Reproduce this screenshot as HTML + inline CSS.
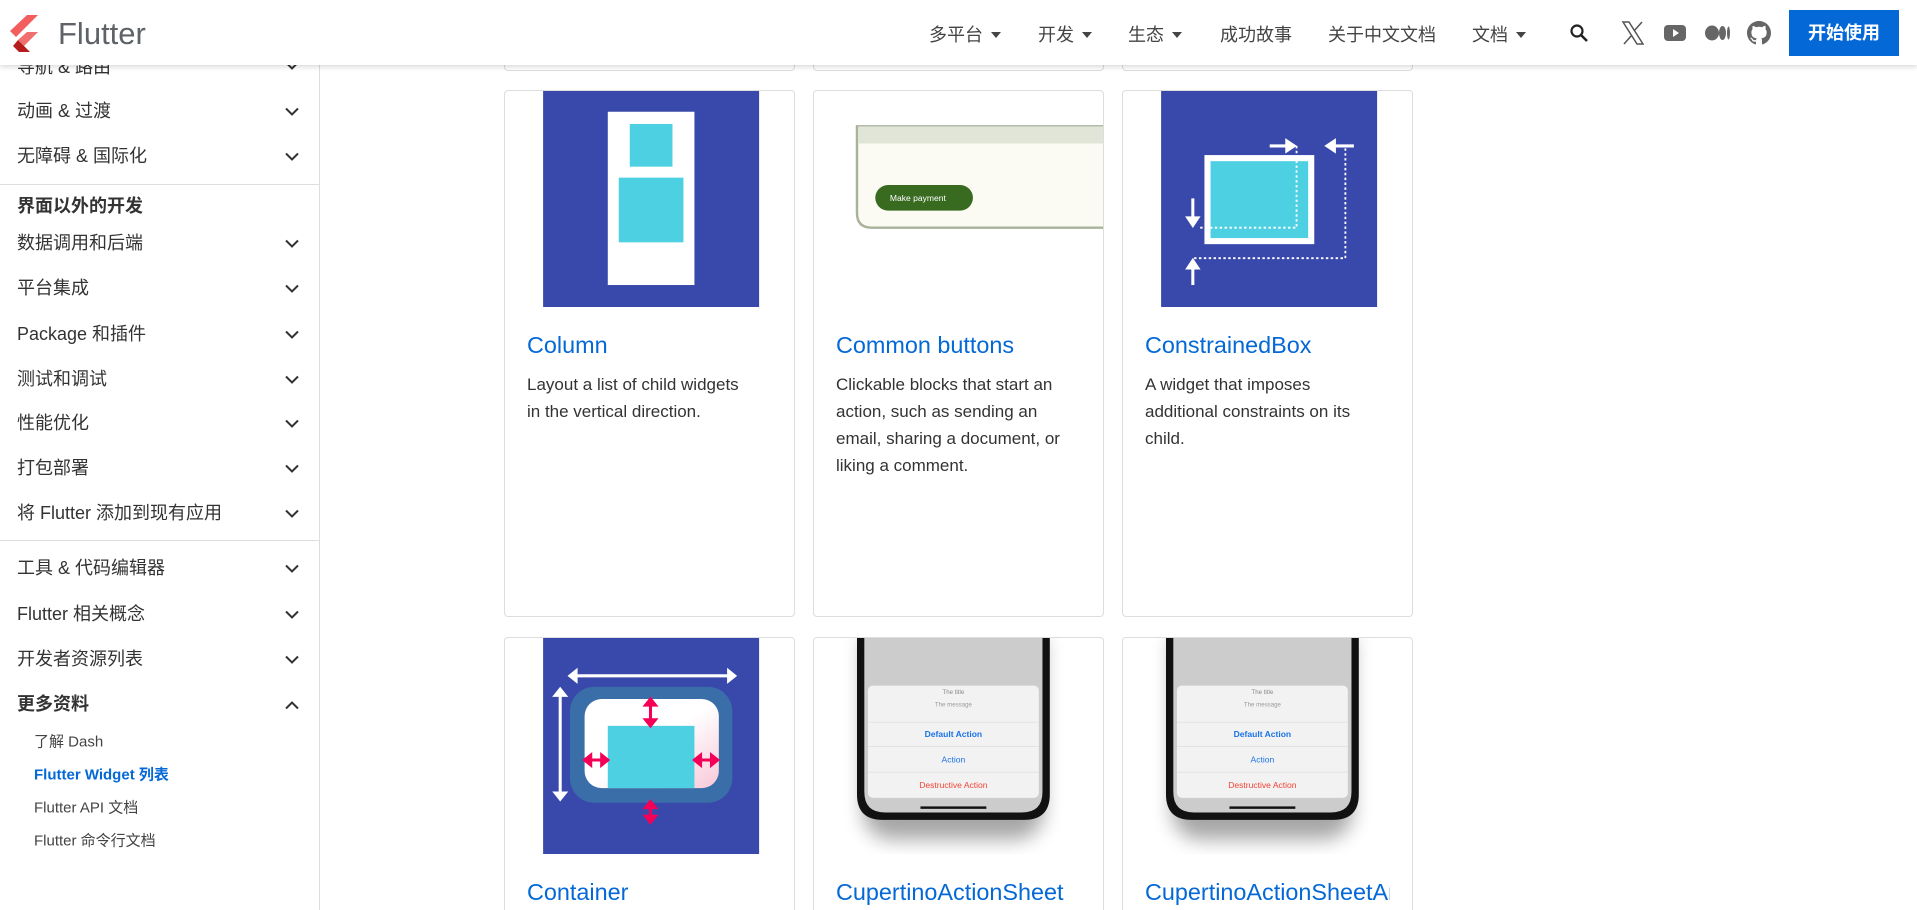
<!DOCTYPE html>
<html><head><meta charset="utf-8"><style>
*{margin:0;padding:0;box-sizing:border-box}
html{width:1917px;height:910px;overflow:hidden}
body{width:1917px;height:910px;overflow:hidden;background:#fff;font-family:"Liberation Sans","Noto Sans CJK SC",sans-serif;color:#333;position:relative}
.hdr{position:absolute;left:0;top:0;width:1917px;height:65px;background:#fff;box-shadow:0 2px 5px rgba(0,0,0,.15);z-index:10}
.nav{position:absolute;top:21px;font-size:18px;color:#444;white-space:nowrap}
.tri{display:inline-block;width:0;height:0;border-left:5px solid transparent;border-right:5px solid transparent;border-top:6px solid #444;vertical-align:middle;margin-left:8px;margin-top:-3px}
.side{position:absolute;left:0;top:0;width:320px;height:910px;border-right:1px solid #ddd}
.si{position:absolute;left:17px;font-size:18px;color:#333;transform:translateY(-50%);white-space:nowrap}
.si.b{font-weight:bold}
.chev{position:absolute;left:285px;transform:translateY(-50%)}
.sub{position:absolute;left:34px;font-size:15px;color:#444;transform:translateY(-50%);white-space:nowrap}
.hr{position:absolute;left:0;width:320px;height:1px;background:#ddd}
.card{position:absolute;width:291px;height:527px;border:1px solid #ddd;border-radius:4px;background:#fff;overflow:hidden}
.card .t{position:absolute;left:22px;top:241px;width:245px;overflow:hidden;font-size:23.4px;color:#0468d7;white-space:nowrap}
.card .d{position:absolute;left:22px;top:280px;width:235px;font-size:17px;line-height:27px;color:#333}
.card svg.img{position:absolute;left:0;top:0}
</style></head><body>
<div class="side">
<div class="si" style="top:66px">导航 &amp; 路由</div><svg class="chev" style="top:66px" width="14" height="9"><polyline points="1,1 7,7 13,1" fill="none" stroke="#333" stroke-width="2"/></svg>
<div class="si" style="top:110px">动画 &amp; 过渡</div><svg class="chev" style="top:112px" width="14" height="9"><polyline points="1,1 7,7 13,1" fill="none" stroke="#333" stroke-width="2"/></svg>
<div class="si" style="top:155px">无障碍 &amp; 国际化</div><svg class="chev" style="top:157px" width="14" height="9"><polyline points="1,1 7,7 13,1" fill="none" stroke="#333" stroke-width="2"/></svg>
<div class="hr" style="top:184px"></div>
<div class="si b" style="top:205px">界面以外的开发</div>
<div class="si" style="top:242px">数据调用和后端</div><svg class="chev" style="top:244px" width="14" height="9"><polyline points="1,1 7,7 13,1" fill="none" stroke="#333" stroke-width="2"/></svg>
<div class="si" style="top:287px">平台集成</div><svg class="chev" style="top:289px" width="14" height="9"><polyline points="1,1 7,7 13,1" fill="none" stroke="#333" stroke-width="2"/></svg>
<div class="si" style="top:333px">Package 和插件</div><svg class="chev" style="top:335px" width="14" height="9"><polyline points="1,1 7,7 13,1" fill="none" stroke="#333" stroke-width="2"/></svg>
<div class="si" style="top:378px">测试和调试</div><svg class="chev" style="top:380px" width="14" height="9"><polyline points="1,1 7,7 13,1" fill="none" stroke="#333" stroke-width="2"/></svg>
<div class="si" style="top:422px">性能优化</div><svg class="chev" style="top:424px" width="14" height="9"><polyline points="1,1 7,7 13,1" fill="none" stroke="#333" stroke-width="2"/></svg>
<div class="si" style="top:467px">打包部署</div><svg class="chev" style="top:469px" width="14" height="9"><polyline points="1,1 7,7 13,1" fill="none" stroke="#333" stroke-width="2"/></svg>
<div class="si" style="top:512px">将 Flutter 添加到现有应用</div><svg class="chev" style="top:514px" width="14" height="9"><polyline points="1,1 7,7 13,1" fill="none" stroke="#333" stroke-width="2"/></svg>
<div class="hr" style="top:540px"></div>
<div class="si" style="top:567px">工具 &amp; 代码编辑器</div><svg class="chev" style="top:569px" width="14" height="9"><polyline points="1,1 7,7 13,1" fill="none" stroke="#333" stroke-width="2"/></svg>
<div class="si" style="top:613px">Flutter 相关概念</div><svg class="chev" style="top:615px" width="14" height="9"><polyline points="1,1 7,7 13,1" fill="none" stroke="#333" stroke-width="2"/></svg>
<div class="si" style="top:658px">开发者资源列表</div><svg class="chev" style="top:660px" width="14" height="9"><polyline points="1,1 7,7 13,1" fill="none" stroke="#333" stroke-width="2"/></svg>
<div class="si b" style="top:703px">更多资料</div><svg class="chev" style="top:705px" width="14" height="9"><polyline points="1,8 7,2 13,8" fill="none" stroke="#333" stroke-width="2"/></svg>
<div class="sub" style="top:741px">了解 Dash</div>
<div class="sub" style="top:774px;color:#0468d7;font-weight:bold">Flutter Widget 列表</div>
<div class="sub" style="top:807px">Flutter API 文档</div>
<div class="sub" style="top:840px">Flutter 命令行文档</div>
</div>

<div class="card" style="left:504px;top:-460px;height:531px"></div>
<div class="card" style="left:813px;top:-460px;height:531px"></div>
<div class="card" style="left:1122px;top:-460px;height:531px"></div>

<div class="card" style="left:504px;top:90px">
<svg class="img" width="291" height="216" viewBox="0 0 238 177"><rect x="31" y="0" width="177" height="177" fill="#3949ab"/><rect x="84" y="17" width="71" height="142" fill="#fff"/><rect x="102" y="27" width="35" height="35" fill="#4dd0e1"/><rect x="93" y="71" width="53" height="53" fill="#4dd0e1"/></svg>
<div class="t">Column</div><div class="d" style="width:222px">Layout a list of child widgets in the vertical direction.</div></div>

<div class="card" style="left:813px;top:90px">
<svg class="img" width="291" height="216" viewBox="0 0 238 177"><path d="M35 29H238V112H47Q35 112 35 100Z" fill="#fbfbf3" stroke="#a9b39c" stroke-width="2"/><rect x="36" y="29" width="202" height="14" fill="#e0e5d8"/><rect x="50" y="77" width="80" height="21" rx="10.5" fill="#386a20"/><text x="62" y="90" font-size="7" fill="#fff" font-family="Liberation Sans">Make payment</text></svg>
<div class="t">Common buttons</div><div class="d">Clickable blocks that start an action, such as sending an email, sharing a document, or liking a comment.</div></div>

<div class="card" style="left:1122px;top:90px">
<svg class="img" width="291" height="216" viewBox="0 0 238 177"><rect x="31" y="0" width="177" height="177" fill="#3949ab"/><rect x="69" y="55" width="85" height="68" fill="#4dd0e1" stroke="#fff" stroke-width="5"/><g stroke="#fff" stroke-width="1.5" stroke-dasharray="2,2" fill="none"><path d="M142 45V112H62"/><path d="M58 137H182V45"/></g><g stroke="#fff" stroke-width="2.5" fill="#fff"><path d="M120 45H138"/><path d="M134 41L140 45L134 49Z"/><path d="M169 45H189"/><path d="M173 41L167 45L173 49Z"/><path d="M57 88V108"/><path d="M53 104L57 110L61 104Z"/><path d="M57 141V159"/><path d="M53 145L57 139L61 145Z"/></g></svg>
<div class="t">ConstrainedBox</div><div class="d">A widget that imposes additional constraints on its child.</div></div>

<div class="card" style="left:504px;top:637px">
<svg class="img" width="291" height="216" viewBox="0 0 238 177"><defs><linearGradient id="g" x1="0" y1="0" x2="1" y2="1"><stop offset=".5" stop-color="#fff"/><stop offset="1" stop-color="#f8c8d8"/></linearGradient></defs><rect x="31" y="0" width="177" height="177" fill="#3949ab"/><rect x="53" y="40" width="133" height="95" rx="20" fill="#3a6ea8"/><rect x="65" y="50" width="110" height="73" rx="14" fill="url(#g)"/><rect x="84" y="72" width="71" height="51" fill="#4dd0e1"/><g stroke="#fff" stroke-width="2.5" fill="#fff"><path d="M57 31H184"/><path d="M58 27L53 31L58 35Z"/><path d="M183 27L188 31L183 35Z"/><path d="M45 46V128"/><path d="M41 47L45 42L49 47Z"/><path d="M41 127L45 132L49 127Z"/></g><g stroke="#f50057" stroke-width="2.5" fill="#f50057"><path d="M119 53V69"/><path d="M115 55L119 50L123 55Z"/><path d="M115 67L119 72L123 67Z"/><path d="M68 100H81"/><path d="M70 96L65 100L70 104Z"/><path d="M79 96L84 100L79 104Z"/><path d="M158 100H171"/><path d="M160 96L155 100L160 104Z"/><path d="M169 96L174 100L169 104Z"/><path d="M119 137V148"/><path d="M115 139L119 134L123 139Z"/><path d="M115 146L119 151L123 146Z"/></g></svg>
<div class="t">Container</div></div>

<div class="card" style="left:813px;top:637px">
<svg class="img" width="291" height="216" viewBox="0 0 238 177"><defs><filter id="sh" x="-30%" y="-30%" width="160%" height="180%"><feGaussianBlur stdDeviation="8"/></filter></defs><path d="M40 0H188V140Q188 160 168 165H60Q40 160 40 140Z" fill="#000" opacity=".35" filter="url(#sh)"/><path d="M35 0H193V128Q193 149 172 149H56Q35 149 35 128Z" fill="#111"/><path d="M41 0H187V126Q187 143 170 143H58Q41 143 41 126Z" fill="#ccc"/><rect x="44" y="39" width="140" height="92" rx="4" fill="#f2f2f2"/><g stroke="#e0e0e0" stroke-width=".7"><path d="M44 69H184M44 89H184M44 110H184"/></g><g font-family="Liberation Sans" text-anchor="middle"><text x="114" y="46" font-size="5" fill="#888">The title</text><text x="114" y="56" font-size="5" fill="#999">The message</text><text x="114" y="81" font-size="7" fill="#1a73e8" font-weight="bold">Default Action</text><text x="114" y="102" font-size="7" fill="#1a73e8">Action</text><text x="114" y="123" font-size="7" fill="#f44336">Destructive Action</text></g><rect x="87" y="138" width="54" height="2" fill="#111"/></svg>
<div class="t">CupertinoActionSheet</div></div>

<div class="card" style="left:1122px;top:637px">
<svg class="img" width="291" height="216" viewBox="0 0 238 177"><path d="M40 0H188V140Q188 160 168 165H60Q40 160 40 140Z" fill="#000" opacity=".35" filter="url(#sh)"/><path d="M35 0H193V128Q193 149 172 149H56Q35 149 35 128Z" fill="#111"/><path d="M41 0H187V126Q187 143 170 143H58Q41 143 41 126Z" fill="#ccc"/><rect x="44" y="39" width="140" height="92" rx="4" fill="#f2f2f2"/><g stroke="#e0e0e0" stroke-width=".7"><path d="M44 69H184M44 89H184M44 110H184"/></g><g font-family="Liberation Sans" text-anchor="middle"><text x="114" y="46" font-size="5" fill="#888">The title</text><text x="114" y="56" font-size="5" fill="#999">The message</text><text x="114" y="81" font-size="7" fill="#1a73e8" font-weight="bold">Default Action</text><text x="114" y="102" font-size="7" fill="#1a73e8">Action</text><text x="114" y="123" font-size="7" fill="#f44336">Destructive Action</text></g><rect x="87" y="138" width="54" height="2" fill="#111"/></svg>
<div class="t">CupertinoActionSheetAnimation</div></div>

<div class="hdr">
<svg style="position:absolute;left:10px;top:15px" width="30" height="37" viewBox="0 0 30 37"><path d="M17 0H28L6 22L0 16Z" fill="#f25d5d"/><path d="M17 17H28L14 31L8 25Z" fill="#f07070"/><path d="M8 25L14 31L20 37H9L3 31Z" fill="#b71c1c"/></svg>
<div style="position:absolute;left:58px;top:16px;font-size:31px;color:#5f6368">Flutter</div>
<div class="nav" style="left:929px">多平台<span class="tri"></span></div>
<div class="nav" style="left:1038px">开发<span class="tri"></span></div>
<div class="nav" style="left:1128px">生态<span class="tri"></span></div>
<div class="nav" style="left:1220px">成功故事</div>
<div class="nav" style="left:1328px">关于中文文档</div>
<div class="nav" style="left:1472px">文档<span class="tri"></span></div>
<svg style="position:absolute;left:1569px;top:23px" width="20" height="20" viewBox="0 0 20 20"><circle cx="8" cy="8" r="5.5" fill="none" stroke="#222" stroke-width="2.2"/><path d="M12 12L18 18" stroke="#222" stroke-width="2.6"/></svg>
<svg style="position:absolute;left:1621px;top:21px" width="24" height="24" viewBox="0 0 24 24"><path d="M2 1H8L22 23H16Z" fill="none" stroke="#555" stroke-width="1.5"/><path d="M21 1L13 10M3 23L11 14" stroke="#555" stroke-width="1.5"/></svg>
<svg style="position:absolute;left:1664px;top:24px" width="22" height="18" viewBox="0 0 22 18"><rect x="0" y="1" width="22" height="16" rx="4" fill="#666"/><path d="M9 5V13L15 9Z" fill="#fff"/></svg>
<svg style="position:absolute;left:1705px;top:25px" width="26" height="16" viewBox="0 0 26 16"><ellipse cx="7" cy="8" rx="7" ry="7.5" fill="#666"/><ellipse cx="17.5" cy="8" rx="3.5" ry="7" fill="#666"/><ellipse cx="23.5" cy="8" rx="1.5" ry="6.5" fill="#666"/></svg>
<svg style="position:absolute;left:1747px;top:20px" width="24" height="26" viewBox="0 0 16 16"><path fill="#666" d="M8 0C3.58 0 0 3.58 0 8c0 3.54 2.290 6.530 5.470 7.590.4.07.55-.17.55-.38 0-.19-.01-.82-.01-1.49-2.010.37-2.530-.49-2.690-.94-.09-.23-.48-.94-.82-1.130-.28-.15-.68-.52-.01-.53.63-.01 1.080.58 1.230.82.72 1.210 1.870.87 2.330.66.07-.52.28-.87.51-1.070-1.780-.2-3.640-.89-3.640-3.950 0-.87.31-1.590.82-2.150-.08-.2-.36-1.020.08-2.120 0 0 .67-.21 2.200.82.64-.18 1.320-.27 2-.27.68 0 1.360.09 2 .27 1.530-1.040 2.200-.82 2.200-.82.44 1.100.16 1.920.08 2.120.51.56.82 1.270.82 2.150 0 3.070-1.870 3.750-3.650 3.950.29.25.54.73.54 1.480 0 1.070-.01 1.930-.01 2.200 0 .21.15.46.55.38A8.013 8.013 0 0016 8c0-4.420-3.580-8-8-8z"/></svg>
<div style="position:absolute;left:1789px;top:10px;width:110px;height:46px;background:#0468d7;color:#fff;font-size:18px;font-weight:bold;text-align:center;line-height:46px">开始使用</div>
</div>
</body></html>
